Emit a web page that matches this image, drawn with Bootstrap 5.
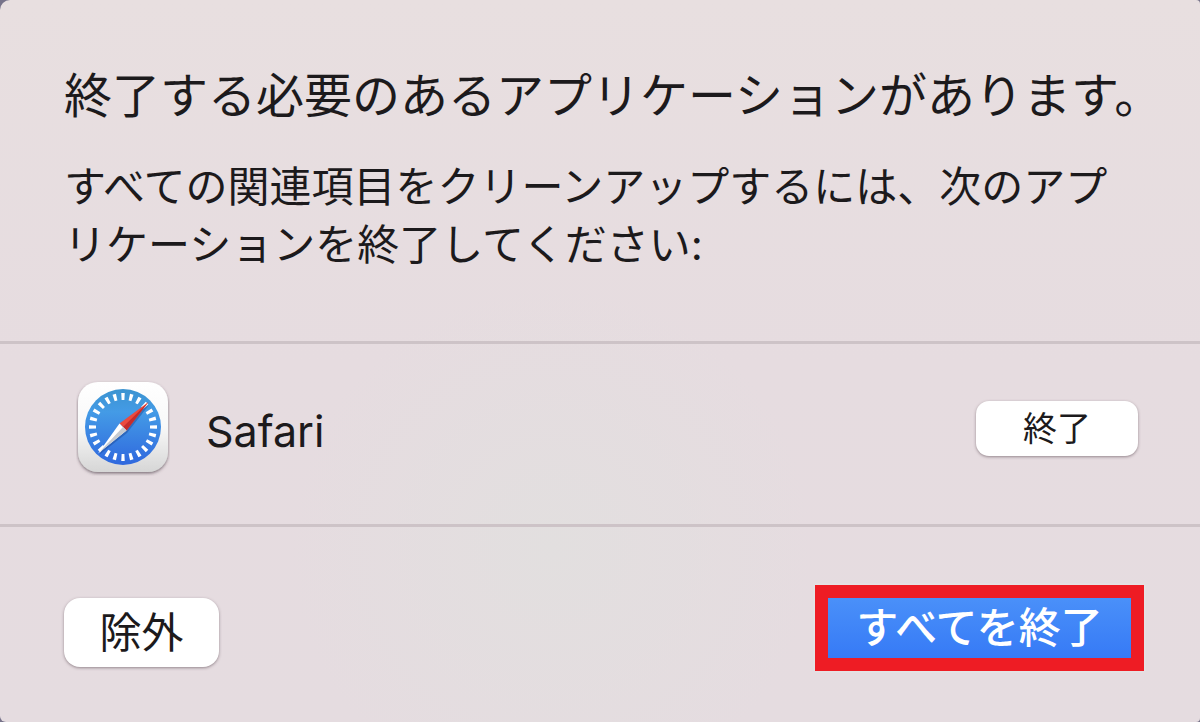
<!DOCTYPE html>
<html lang="ja">
<head>
<meta charset="utf-8">
<meta name="viewport" content="width=device-width, initial-scale=1">
<title>終了する必要のあるアプリケーション</title>
<link href="https://cdn.jsdelivr.net/npm/bootstrap@5.3.0/dist/css/bootstrap.min.css" rel="stylesheet">
<style>
  body { background: #77738a; font-family: Inter, "Noto Sans CJK JP", sans-serif; color: #1c1a1c; }
  .dialog-sheet {
    background:
      radial-gradient(ellipse 260px 260px at 46% 76%, #e2dfdf, transparent),
      linear-gradient(#e8dfe0, #e6dce0 50%, #e5dce0);
    border-radius: 10px 4px 4px 6px;
  }
  .dialog-head { padding: 61px 24px 67px 64px; }
  .dialog-title { font-size: 48px; line-height: 70px; margin-bottom: 27px; font-weight: 400; }
  .dialog-text { font-size: 42px; line-height: 58px; padding-right: 56px; }
  .app-row { padding: 36px 62px 48px 76px; border-top: 3px solid #cdc3c7; border-bottom: 3px solid #cdc3c7; }
  .app-icon { width: 94px; height: 96px; }
  .app-name { font-size: 43px; line-height: 58px; margin-left: 36px; padding-top: 6px; }
  .btn-mac, .btn-mac:hover {
    background: #fff; color: #1c1a1c; border: 0; padding: 0;
    box-shadow: 0 1px 3px rgba(70, 50, 60, .5);
  }
  .btn-quit { width: 162px; height: 55px; font-size: 34px; line-height: 55px; border-radius: 13px; }
  .btn-skip { width: 155px; height: 69px; font-size: 42px; line-height: 66px; border-radius: 16px; }
  .dialog-foot { padding: 58px 56px 51px 64px; }
  .btn-all, .btn-all:hover {
    width: 329px; height: 86px; padding: 0; border: 13px solid #ee1c24; border-radius: 0;
    background: linear-gradient(#4a90f9, #367af6) padding-box; color: #fff;
    font-size: 42px; line-height: 60px; font-weight: 500;
    box-shadow: 0 0 2px 1px #e3e5e5;
  }
</style>
</head>
<body>
<main class="dialog-sheet min-vh-100 d-flex flex-column" role="dialog" aria-labelledby="dlg-title">
  <header class="dialog-head">
    <h1 class="dialog-title" id="dlg-title">終了する必要のあるアプリケーションがあります。</h1>
    <p class="dialog-text mb-0">すべての関連項目をクリーンアップするには、次のアプリケーションを終了してください:</p>
  </header>
  <section class="app-row d-flex align-items-center">
    <svg class="app-icon flex-shrink-0" viewBox="0 0 94 96" role="img" aria-label="Safari">
      <defs>
        <linearGradient id="plate" x1="0" y1="0" x2="0" y2="1"><stop offset="0" stop-color="#fff"/><stop offset=".5" stop-color="#f8f8f8"/><stop offset="1" stop-color="#d6d6d6"/></linearGradient>
        <linearGradient id="dial" x1="0" y1="0" x2="0" y2="1"><stop offset="0" stop-color="#3b93d0"/><stop offset=".3" stop-color="#449be6"/><stop offset="1" stop-color="#2f68de"/></linearGradient>
        <filter id="soft" x="-20%" y="-20%" width="140%" height="140%"><feDropShadow dx="0" dy="1.5" stdDeviation="1.6" flood-color="#4a3b44" flood-opacity=".65"/></filter>
      </defs>
      <rect x="2" y="2" width="90" height="90" rx="20" fill="url(#plate)" filter="url(#soft)"/>
      <circle cx="47" cy="47" r="38" fill="url(#dial)"/>
      <circle cx="47" cy="47" r="30.5" fill="none" stroke="#fff" stroke-width="7" pathLength="240" stroke-dasharray="4 6" stroke-dashoffset="2"/>
      <path d="M73 25 51 53 23 75 44 45Z" fill="#173c87" opacity=".4"/>
      <path d="M72.500 22 43.500 43.500 50.500 50.500Z" fill="#eb4a3e"/>
      <path d="M72.500 22 50.500 50.500 47 47Z" fill="#c52c2b"/>
      <path d="M22 73.500 43.500 43.500 50.500 50.500Z" fill="#fff"/>
      <path d="M22 73.500 47 47 50.500 50.500Z" fill="#c6cad0"/>
    </svg>
    <span class="app-name">Safari</span>
    <button type="button" class="btn btn-mac btn-quit ms-auto">終了</button>
  </section>
  <footer class="dialog-foot d-flex align-items-end justify-content-between">
    <button type="button" class="btn btn-mac btn-skip mb-1">除外</button>
    <button type="button" class="btn btn-all">すべてを終了</button>
  </footer>
</main>
<script src="https://cdn.jsdelivr.net/npm/bootstrap@5.3.0/dist/js/bootstrap.bundle.min.js"></script>
</body>
</html>
